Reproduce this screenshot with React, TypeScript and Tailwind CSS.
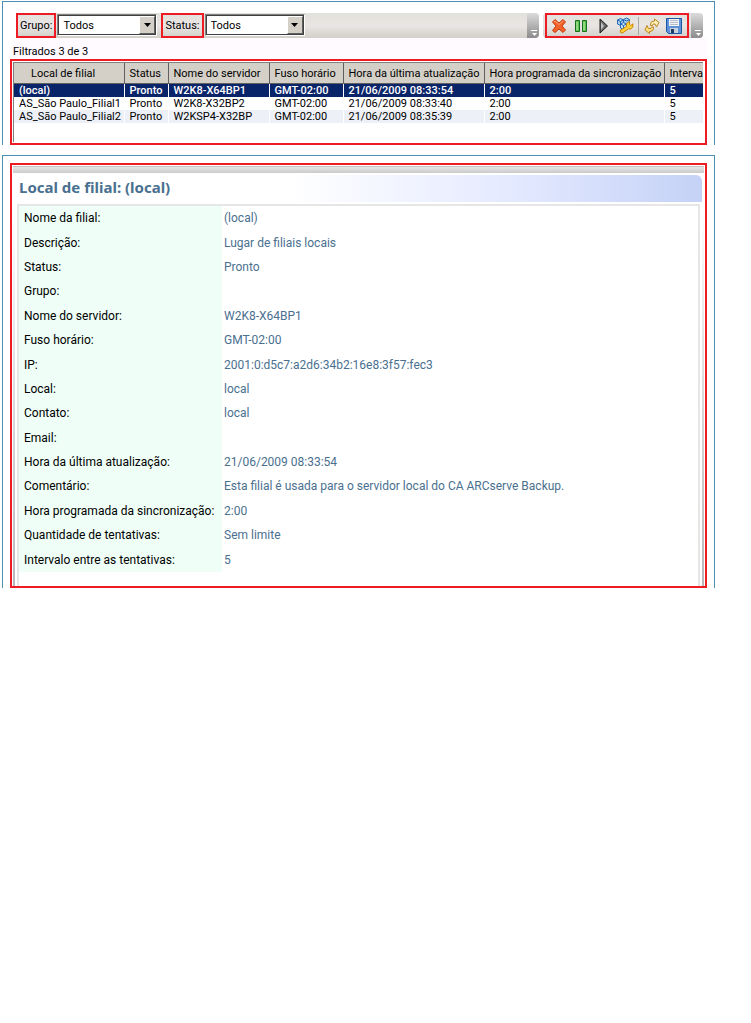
import { useState } from 'react';
import type { ReactNode } from 'react';

const columns = [
    { label: 'Local de filial', width: 'w-[110px]' },
    { label: 'Status', width: 'w-[44px]' },
    { label: 'Nome do servidor', width: 'w-[101px]' },
    { label: 'Fuso horário', width: 'w-[74px]' },
    { label: 'Hora da última atualização', width: 'w-[141px]' },
    { label: 'Hora programada da sincronização', width: 'w-[180px]' },
    { label: 'Interva', width: 'w-auto' },
];

const branches = [
    ['(local)', 'Pronto', 'W2K8-X64BP1', 'GMT-02:00', '21/06/2009 08:33:54', '2:00', '5'],
    ['AS_São Paulo_Filial1', 'Pronto', 'W2K8-X32BP2', 'GMT-02:00', '21/06/2009 08:33:40', '2:00', '5'],
    ['AS_São Paulo_Filial2', 'Pronto', 'W2KSP4-X32BP', 'GMT-02:00', '21/06/2009 08:35:39', '2:00', '5'],
];

const details = [
    ['Nome da filial:', '(local)'],
    ['Descrição:', 'Lugar de filiais locais'],
    ['Status:', 'Pronto'],
    ['Grupo:', ''],
    ['Nome do servidor:', 'W2K8-X64BP1'],
    ['Fuso horário:', 'GMT-02:00'],
    ['IP:', '2001:0:d5c7:a2d6:34b2:16e8:3f57:fec3'],
    ['Local:', 'local'],
    ['Contato:', 'local'],
    ['Email:', ''],
    ['Hora da última atualização:', '21/06/2009 08:33:54'],
    ['Comentário:', 'Esta filial é usada para o servidor local do CA ARCserve Backup.'],
    ['Hora programada da sincronização:', '2:00'],
    ['Quantidade de tentativas:', 'Sem limite'],
    ['Intervalo entre as tentativas:', '5'],
];

function DeleteIcon() {
    return (
        <svg width="16" height="16" viewBox="0 0 16 16">
            <path d="M1.5 4 4 1.5 8 5l4-3.5L14.5 4 11 8l3.5 4-2.5 2.5L8 11l-4 3.5L1.5 12.5 5 8z" fill="#f2642c" stroke="#c8380c" />
            <path d="M3 4l1-1 4 3.5L12 3" fill="none" stroke="#ff9c6c" />
        </svg>
    );
}

function PauseIcon() {
    return (
        <svg width="16" height="16" viewBox="0 0 16 16">
            <path d="M2.5 2.5h4v11h-4zM9.5 2.5h4v11h-4z" fill="#5fc24f" stroke="#14701c" />
            <path d="M4 4v8M11 4v8" stroke="#c5f0b5" />
        </svg>
    );
}

function PlayIcon() {
    return (
        <svg width="16" height="16" viewBox="0 0 16 16">
            <path d="M5 1v14l7.5-7z" fill="#686868" stroke="#1c1c1c" />
            <path d="M6 4v8l3-4z" fill="#c0c0c0" />
        </svg>
    );
}

function ConfigureIcon() {
    return (
        <svg width="18" height="17" viewBox="0 0 18 17">
            <path d="M1.5 3 4.5 1.5 7.5 3v4l-3 1.5-3-1.5z" fill="#a8d0f6" stroke="#2468b0" />
            <path d="M7.5 2.5 10.500 1l3 1.5v4l-3 1.5-3-1.500z" fill="#a8d0f6" stroke="#2468b0" />
            <path d="M4.500 7 7.500 5.500l3 1.500v4l-3 1.500-3-1.500z" fill="#c5e1fa" stroke="#2468b0" />
            <path d="M1.500 3l3 1.500 3-1.500M4.500 4.500v3M7.500 2.500l3 1.500 3-1.500M4.500 7l3 1.500 3-1.500M7.500 8.500v4" fill="none" stroke="#2468b0" />
            <path d="M4 13.500 10.500 9.500Q9.800 5.500 13.500 4.500V7.500l1.300 1L17 6.800q.6 4-2.300 5.200l-2.200-.2L6.500 16q-2.500.2-2.500-2.500z" fill="#ffd13b" stroke="#c98400" />
        </svg>
    );
}

function RefreshIcon() {
    return (
        <svg width="16" height="16" viewBox="0 0 16 16">
            <path d="M6.500 7.500V6Q6.500 3 10.500 3V1L15 4.500 12.500 9l-1.300-2.800Q8.500 5 8.500 7.500z" fill="#fff0b8" stroke="#bd8420" />
            <path d="M9.500 9v1.500q0 3-4 3v2L1 12l2-4.500 1.500 3q3 .8 3-1.500z" fill="#ffdf80" stroke="#bd8420" />
        </svg>
    );
}

function SaveIcon() {
    return (
        <svg width="16" height="16" viewBox="0 0 16 16">
            <path d="M.5.5h15v15h-13l-2-2z" fill="#5c93d8" stroke="#1c55a4" />
            <path d="M3 1h10v7H3z" fill="#f2f4f6" />
            <path d="M4 2.500h8M4 4.500h8M4 6.500h8" stroke="#b4bdc8" />
            <path d="M4 10h8v5H4z" fill="#c9d2dc" />
            <path d="M5 11h3v4H5z" fill="#203c64" />
        </svg>
    );
}

function ToolButton({ label, children }: { label: string; children: ReactNode }) {
    return (
        <button type="button" aria-label={label} className="flex h-5 w-[22px] items-center justify-center">
            {children}
        </button>
    );
}

function Grip() {
    return (
        <div className="flex h-full w-3 shrink-0 items-end justify-center rounded-r bg-linear-to-b from-[#dcdcdc] to-[#8c8c8c] pb-px">
            <svg width="7" height="7" viewBox="0 0 7 7">
                <path d="M1 .5h6" stroke="#fff" />
                <path d="M2 3h5L4.500 6z" fill="#fff" />
            </svg>
        </div>
    );
}

function Filter({ id, label }: { id: string; label: string }) {
    const [value, setValue] = useState('Todos');
    return (
        <div className="flex items-start">
            <label htmlFor={id} className="flex h-[25px] items-center border-2 border-[#ed1c24] px-[2px] whitespace-nowrap">
                {label}
            </label>
            <div className="relative mt-px ml-px h-[22px] w-[100px] border border-t-[#808080] border-r-white border-b-white border-l-[#808080]">
                <select
                    id={id}
                    value={value}
                    onChange={e => setValue(e.target.value)}
                    className="h-full w-full appearance-none border border-[#404040] bg-white pl-1 outline-none"
                >
                    <option>Todos</option>
                </select>
                <span className="pointer-events-none absolute inset-y-px right-px flex w-4 items-center justify-center border border-t-white border-r-[#606060] border-b-[#606060] border-l-white bg-[#d4d0c8]">
                    <svg width="7" height="4" viewBox="0 0 7 4">
                        <path d="M0 0h7L3.500 4z" fill="#000" />
                    </svg>
                </span>
            </div>
        </div>
    );
}

export default function App() {
    const [selected, setSelected] = useState(0);

    return (
        <div className="min-h-screen bg-white pt-px pr-9 pl-[2px] font-[Roboto,sans-serif] text-[11px] leading-[13px] text-black">
            {/* Branch list */}
            <section className="border-x border-t border-[#4b8fb3] px-[7px] pt-[10px]">
                <div className="flex gap-1 pr-1 pl-[6px]">
                    <div className="mt-px flex h-[25px] flex-1 justify-between rounded-r bg-linear-to-b from-[#e2e1da] via-[#e9e5e4] to-[#d2d0c9]">
                        <div className="flex gap-1">
                            <Filter id="grupo" label="Grupo:" />
                            <Filter id="status" label="Status:" />
                        </div>
                        <Grip />
                    </div>
                    <div className="mt-px flex h-[25px] justify-between rounded bg-linear-to-b from-[#e2e1da] via-[#e9e5e4] to-[#d2d0c9] pl-[2px]">
                        <div className="mr-[2px] flex h-[25px] items-center border-2 border-[#ed1c24] pr-[2px] pl-px">
                            <ToolButton label="Excluir"><DeleteIcon /></ToolButton>
                            <ToolButton label="Pausar"><PauseIcon /></ToolButton>
                            <ToolButton label="Continuar"><PlayIcon /></ToolButton>
                            <ToolButton label="Configurar"><ConfigureIcon /></ToolButton>
                            <div className="mx-[2px] h-[18px] w-px bg-[#a9a9a4]" />
                            <ToolButton label="Atualizar"><RefreshIcon /></ToolButton>
                            <ToolButton label="Salvar"><SaveIcon /></ToolButton>
                        </div>
                        <Grip />
                    </div>
                </div>

                <p className="ml-[3px] bg-[#fefaff] pt-2 pb-px leading-[12px]">Filtrados 3 de 3</p>

                <div className="h-[86px] border-2 border-[#ed1c24] p-px pr-[2px]">
                    <div className="h-full overflow-hidden border-t border-l border-[#808080]">
                        <table className="w-full table-fixed border-collapse text-left whitespace-nowrap">
                            <thead>
                                <tr className="h-[20px] bg-[#d4d0c8]">
                                    {columns.map((col, i) => (
                                        <th
                                            key={col.label}
                                            className={`${col.width} border-b border-[#606060] p-0 pt-[2px] font-normal not-last:border-r ${i === 0 ? 'pl-[17px]' : 'pl-[5px]'}`}
                                        >
                                            {col.label}
                                        </th>
                                    ))}
                                </tr>
                            </thead>
                            <tbody>
                                {branches.map((row, i) => (
                                    <tr
                                        key={row[0]}
                                        onClick={() => setSelected(i)}
                                        className={i === selected ? 'h-[14px] bg-[#0a246a] font-medium text-white' : i === 2 ? 'bg-[#edf1f7]' : 'bg-white'}
                                    >
                                        {row.map((cell, j) => (
                                            <td key={j} className="border-white p-0 pl-[5px] not-last:border-r">{cell}</td>
                                        ))}
                                    </tr>
                                ))}
                            </tbody>
                        </table>
                    </div>
                </div>
            </section>

            {/* Branch details */}
            <section className="mt-[10px] border-x border-t border-[#4b8fb3] px-[7px] pt-[7px]">
                <div className="border-2 border-[#ed1c24] px-px pt-px">
                    <div className="h-[7px] border-t border-[#c4c4c4] bg-linear-to-b from-[#e6e6e6] to-[#cacaca]" />
                    <h1 className="mt-[2px] mr-[2px] flex h-[27px] items-center rounded-tr-md bg-linear-to-r from-white from-40% via-[#e6ebff] via-70% to-[#c5d2f6] pb-[3px] pl-[6px] font-['Noto_Sans',sans-serif] text-[15px] leading-5 font-bold text-[#4a708f]">
                        Local de filial: (local)
                    </h1>
                    <div className="mt-[2px] bg-linear-to-b from-white to-[#b8b8bc] px-[2px]">
                        <div className="bg-white px-[2px]">
                            <div className="border-x-2 border-t-2 border-[#e6e6e6] pb-[14px]">
                                <table className="h-[366px] w-full table-fixed border-collapse text-left text-[12px] leading-4">
                                    <tbody>
                                        {details.map(([label, value]) => (
                                            <tr key={label}>
                                                <th className="w-[203px] bg-[#effff7] p-0 pl-[5px] font-normal whitespace-nowrap">{label}</th>
                                                <td className="p-0 pl-[2px] text-[#4a708f]">{value}</td>
                                            </tr>
                                        ))}
                                    </tbody>
                                </table>
                            </div>
                        </div>
                    </div>
                </div>
            </section>
        </div>
    );
}
